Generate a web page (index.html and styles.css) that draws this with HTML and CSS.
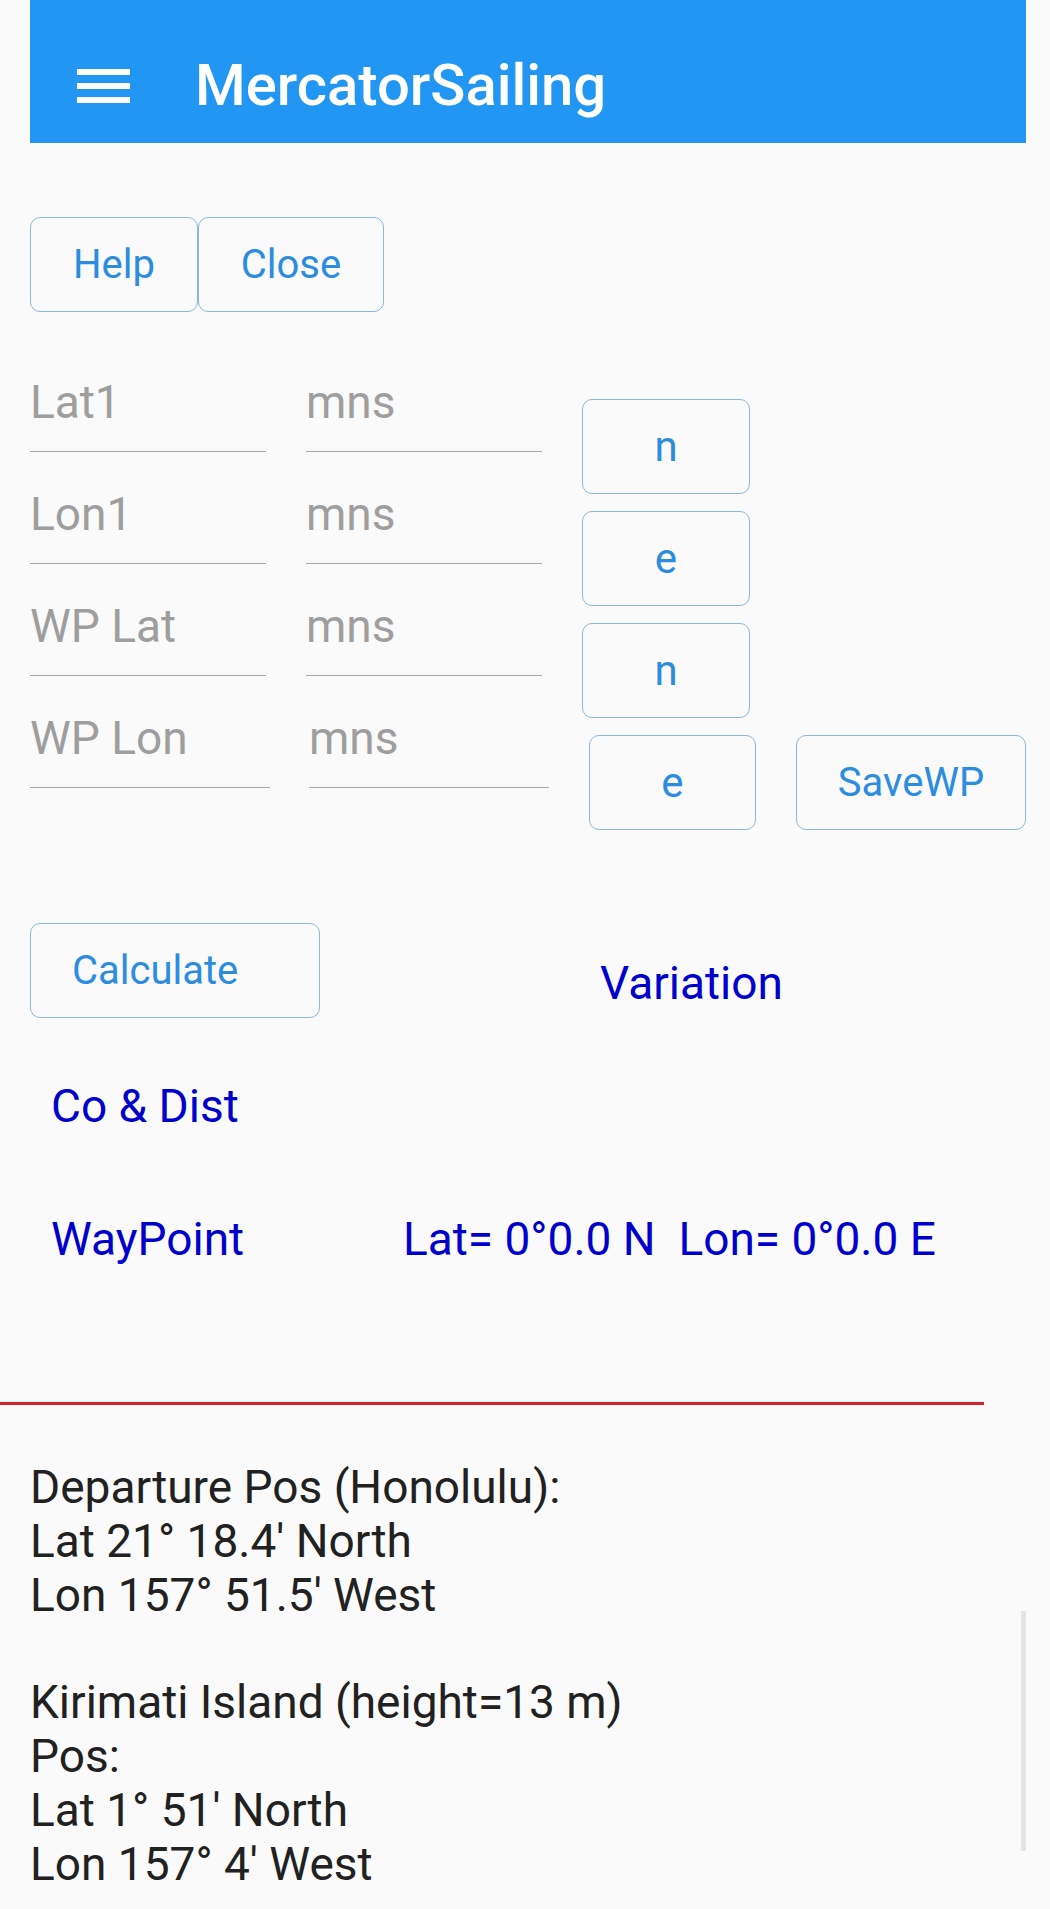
FILE: index.html
```html
<!DOCTYPE html>
<html lang="en">
<head>
    <meta charset="UTF-8">
    <meta name="viewport" content="width=device-width, initial-scale=1.0">
    <title>MercatorSailing</title>
    <link rel="stylesheet" href="styles.css">
</head>
<body>

    <div class="page">

        <div class="toolbar">
            <div class="menu-icon">
                <span></span>
                <span></span>
                <span></span>
            </div>
            <div class="toolbar-title">MercatorSailing</div>
        </div>

        <div class="top-buttons">
            <button class="btn btn-help">Help</button>
            <button class="btn btn-close">Close</button>
        </div>

        <!-- position inputs -->
        <div class="inputs">
            <div class="input-row">
                <div class="field">Lat1</div>
                <div class="field">mns</div>
                <button class="btn btn-dir">n</button>
            </div>
            <div class="input-row">
                <div class="field">Lon1</div>
                <div class="field">mns</div>
                <button class="btn btn-dir">e</button>
            </div>
            <div class="input-row">
                <div class="field">WP Lat</div>
                <div class="field">mns</div>
                <button class="btn btn-dir">n</button>
            </div>
            <div class="input-row last-row">
                <div class="field">WP Lon</div>
                <div class="field">mns</div>
                <button class="btn btn-dir">e</button>
                <button class="btn btn-save">SaveWP</button>
            </div>
        </div>

        <div class="calc-row">
            <button class="btn btn-calc">Calculate</button>
            <div class="label variation">Variation</div>
        </div>

        <div class="label co-dist">Co &amp; Dist</div>

        <div class="waypoint-row">
            <div class="label waypoint">WayPoint</div>
            <div class="label wp-pos">Lat= 0°0.0 N&nbsp; Lon= 0°0.0 E</div>
        </div>

        <div class="divider"></div>

        <div class="info">
            Departure Pos (Honolulu):<br>
            Lat 21° 18.4' North<br>
            Lon 157° 51.5' West<br>
            <br>
            Kirimati Island (height=13 m)<br>
            Pos:<br>
            Lat 1° 51' North<br>
            Lon 157° 4' West
        </div>

        <div class="scroll-thumb"></div>
    </div>

</body>
</html>
```

FILE: styles.css
```css
body {
    margin: 0;
    padding: 0;
    background-color: #fafafa;
    font-family: Roboto, "Noto Sans", sans-serif;
}
.page {
    position: relative;
    padding: 0 24px 0 30px;
    height: 1909px;
    box-sizing: border-box;
    overflow: hidden;
}

/* toolbar */
.toolbar {
    height: 143px;
    box-sizing: border-box;
    padding-top: 28px;
    background-color: #2196f3;
    display: flex;
    align-items: center;
}
.menu-icon {
    margin-left: 47px;
    width: 53px;
    display: flex;
    flex-direction: column;
    gap: 8px;
}
.menu-icon span {
    display: block;
    height: 6px;
    background-color: white;
}
.toolbar-title {
    margin-left: 65px;
    color: white;
    font-size: 58px;
    font-weight: 500;
    line-height: 1;
    padding-bottom: 2px;
}

/* buttons */
.btn {
    height: 95px;
    box-sizing: border-box;
    border: 1.5px solid #8bb8d9;
    border-radius: 10px;
    background: transparent;
    color: #2b8ce0;
    font-family: Roboto, "Noto Sans", sans-serif;
    font-size: 40px;
    padding: 0;
    margin: 0;
}
.top-buttons {
    display: flex;
    margin-top: 74px;
}
.btn-help {
    width: 168px;
}
.btn-close {
    width: 186px;
}

/* inputs */
.inputs {
    margin-top: 49px;
}
.input-row {
    display: flex;
    height: 112px;
}
.field {
    width: 236px;
    margin-top: 14px;
    margin-right: 40px;
    height: 77px;
    box-sizing: border-box;
    border-bottom: 1.5px solid #a8a8a8;
    color: #9e9e9e;
    font-size: 46px;
    line-height: 54px;
}
.btn-dir {
    width: 168px;
    margin-top: 38px;
    font-size: 42px;
}
.last-row .field {
    width: 240px;
    margin-right: 39px;
}
.last-row .btn-dir {
    width: 167px;
    margin-left: 1px;
}
.btn-save {
    width: 230px;
    margin-top: 38px;
    margin-left: 40px;
}

/* results */
.calc-row {
    display: flex;
    margin-top: 114px;
}
.btn-calc {
    width: 290px;
    text-align: left;
    padding-left: 41px;
}
.label {
    color: #0000cc;
    font-size: 46px;
    line-height: 54px;
}
.variation {
    margin-left: 280px;
    margin-top: 33px;
}
.co-dist {
    margin-top: 61px;
    padding-left: 21px;
}
.waypoint-row {
    display: flex;
    margin-top: 79px;
}
.waypoint {
    padding-left: 21px;
    width: 352px;
}
.divider {
    margin-top: 136px;
    margin-left: -30px;
    width: 984px;
    height: 3px;
    background-color: #d2232a;
}
.info {
    margin-top: 56px;
    color: #212121;
    font-size: 46px;
    line-height: 53.8px;
}
.scroll-thumb {
    position: absolute;
    top: 1611px;
    right: 24px;
    width: 5px;
    height: 240px;
    background-color: #e4e4e4;
}
```
